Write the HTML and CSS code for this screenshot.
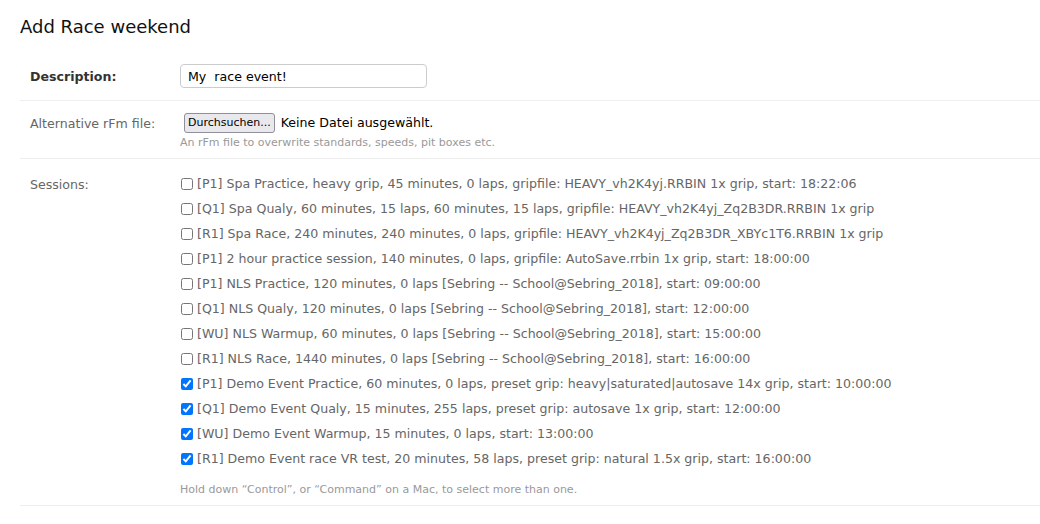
FILE: index.html
```html
<!DOCTYPE html>
<html>
<head>
<meta charset="utf-8">
<link rel="stylesheet" href="styles.css">
</head>
<body>
<div class="content">
  <h1 class="title">Add Race weekend</h1>
  <form class="form">
    <div class="form-row">
      <label class="label required">Description:</label>
      <div class="field">
        <input class="text-input" type="text" value="My  race event!">
      </div>
    </div>
    <div class="form-row">
      <label class="label">Alternative rFm file:</label>
      <div class="field">
        <div class="file-input">
          <span class="file-button">Durchsuchen...</span>
          <span class="file-name">Keine Datei ausgewählt.</span>
        </div>
        <div class="help">An rFm file to overwrite standards, speeds, pit boxes etc.</div>
      </div>
    </div>
    <div class="form-row">
      <label class="label label-sessions">Sessions:</label>
      <div class="field">
        <ul class="checklist">
          <li><label><input type="checkbox"> [P1] Spa Practice, heavy grip, 45 minutes, 0 laps, gripfile: HEAVY_vh2K4yj.RRBIN 1x grip, start: 18:22:06</label></li>
          <li><label><input type="checkbox"> [Q1] Spa Qualy, 60 minutes, 15 laps, 60 minutes, 15 laps, gripfile: HEAVY_vh2K4yj_Zq2B3DR.RRBIN 1x grip</label></li>
          <li><label><input type="checkbox"> [R1] Spa Race, 240 minutes, 240 minutes, 0 laps, gripfile: HEAVY_vh2K4yj_Zq2B3DR_XBYc1T6.RRBIN 1x grip</label></li>
          <li><label><input type="checkbox"> [P1] 2 hour practice session, 140 minutes, 0 laps, gripfile: AutoSave.rrbin 1x grip, start: 18:00:00</label></li>
          <li><label><input type="checkbox"> [P1] NLS Practice, 120 minutes, 0 laps [Sebring -- School@Sebring_2018], start: 09:00:00</label></li>
          <li><label><input type="checkbox"> [Q1] NLS Qualy, 120 minutes, 0 laps [Sebring -- School@Sebring_2018], start: 12:00:00</label></li>
          <li><label><input type="checkbox"> [WU] NLS Warmup, 60 minutes, 0 laps [Sebring -- School@Sebring_2018], start: 15:00:00</label></li>
          <li><label><input type="checkbox"> [R1] NLS Race, 1440 minutes, 0 laps [Sebring -- School@Sebring_2018], start: 16:00:00</label></li>
          <li><label><input type="checkbox" checked> [P1] Demo Event Practice, 60 minutes, 0 laps, preset grip: heavy|saturated|autosave 14x grip, start: 10:00:00</label></li>
          <li><label><input type="checkbox" checked> [Q1] Demo Event Qualy, 15 minutes, 255 laps, preset grip: autosave 1x grip, start: 12:00:00</label></li>
          <li><label><input type="checkbox" checked> [WU] Demo Event Warmup, 15 minutes, 0 laps, start: 13:00:00</label></li>
          <li><label><input type="checkbox" checked> [R1] Demo Event race VR test, 20 minutes, 58 laps, preset grip: natural 1.5x grip, start: 16:00:00</label></li>
        </ul>
        <div class="help help-sessions">Hold down “Control”, or “Command” on a Mac, to select more than one.</div>
      </div>
    </div>
  </form>
</div>
</body>
</html>
```

FILE: styles.css
```css
* { box-sizing: border-box; }
html, body { margin: 0; padding: 0; background: #fff; }
body {
  font-family: "DejaVu Sans", Verdana, sans-serif;
  font-size: 12.6px;
  color: #333;
}
.content { padding: 0 0 0 20px; }
.title {
  margin: 0;
  padding: 15px 0 0 0;
  height: 54px;
  font-size: 18px;
  font-weight: normal;
  color: #111;
  line-height: 24px;
}
.form-row {
  display: flex;
  padding: 10px;
  border-bottom: 1px solid #eee;
}
.label {
  width: 150px;
  flex: none;
  color: #666;
  line-height: 16px;
  padding-top: 5px;
}
.label.required { font-weight: bold; color: #333; }
.label-sessions { padding-top: 8px; }
.field { flex: 1; }
.text-input {
  display: block;
  width: 247px;
  height: 24px;
  border: 1px solid #ccc;
  border-radius: 4px;
  padding: 2px 7px;
  font-family: "DejaVu Sans", Verdana, sans-serif;
  font-size: 12.6px;
  color: #000;
  margin: 0 0 2px 0;
}
.file-input { display: flex; align-items: center; height: 23px; }
.file-button {
  display: inline-block;
  margin-left: 4px;
  padding: 1px 3px;
  height: 20px;
  line-height: 16px;
  font-size: 11px;
  color: #000;
  background: #e9e9ed;
  border: 1px solid #8f8f9d;
  border-radius: 3px;
}
.file-name { margin-left: 6px; color: #000; }
.help {
  font-size: 11px;
  color: #999;
  margin-top: 3px;
  line-height: 11px;
  height: 11px;
}
.checklist {
  list-style: none;
  margin: 2px 0 0 0;
  padding: 0;
}
.checklist li {
  height: 25px;
  line-height: 25px;
  color: #666;
}
.checklist label { display: flex; align-items: center; white-space: pre; }
.checklist input {
  width: 12px;
  height: 12px;
  margin: 0 0 0 1px;
  accent-color: #0075ff;
}
.help-sessions { margin-top: 13px; }
```
